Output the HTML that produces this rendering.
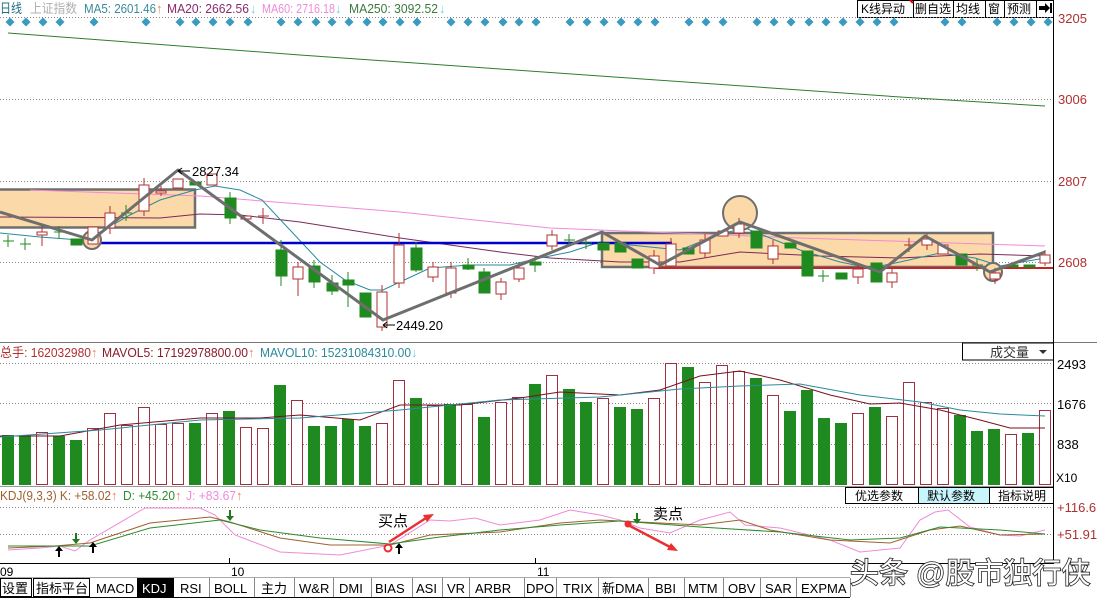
<!DOCTYPE html>
<html><head><meta charset="utf-8"><style>
html,body{margin:0;padding:0;background:#fff;width:1097px;height:599px;overflow:hidden}
svg{display:block;font-family:"Liberation Sans","Noto Sans CJK SC",sans-serif}
</style></head><body>
<svg width="1097" height="599" viewBox="0 0 1097 599" xmlns="http://www.w3.org/2000/svg">
<!-- header -->
<g font-size="13">
<text x="0" y="13" fill="#207080" textLength="22" lengthAdjust="spacingAndGlyphs">日线</text>
<text x="30" y="13" fill="#b0b0b0" textLength="47" lengthAdjust="spacingAndGlyphs">上证指数</text>
<text x="84" y="13" fill="#3a8a9a" textLength="72" lengthAdjust="spacingAndGlyphs">MA5: 2601.46</text><text x="156" y="13" fill="#f08060">↑</text>
<text x="167" y="13" fill="#8b2a6a" textLength="82" lengthAdjust="spacingAndGlyphs">MA20: 2662.56</text><text x="250" y="13" fill="#70d0e0">↓</text>
<text x="262" y="13" fill="#f08ad8" textLength="73" lengthAdjust="spacingAndGlyphs">MA60: 2716.18</text><text x="335" y="13" fill="#70d0e0">↓</text>
<text x="349" y="13" fill="#3c7a3c" textLength="89" lengthAdjust="spacingAndGlyphs">MA250: 3092.52</text><text x="439" y="13" fill="#70d0e0">↓</text>
</g>
<!-- top buttons -->
<g font-size="12" fill="#000">
<rect x="857.5" y="0.5" width="196" height="17" fill="#fff" stroke="#000"/>
<line x1="913.5" y1="0" x2="913.5" y2="18" stroke="#000"/><line x1="953.5" y1="0" x2="953.5" y2="18" stroke="#000"/>
<line x1="985.5" y1="0" x2="985.5" y2="18" stroke="#000"/><line x1="1004.5" y1="0" x2="1004.5" y2="18" stroke="#000"/>
<line x1="1036.5" y1="0" x2="1036.5" y2="18" stroke="#000"/>
<text x="861" y="13">K线异动</text><text x="915" y="13">删自选</text><text x="956" y="13">均线</text>
<text x="988" y="13">窗</text><text x="1007" y="13">预测</text>
<path d="M1039 6h6v-3l5 5-5 5v-3h-6z M1050 3h2v10h-2z" fill="#000"/>
<path d="M910 0l3 3" stroke="#e00" stroke-width="2"/>
</g>
<!-- grid -->
<g stroke="#888" stroke-dasharray="1,2" stroke-width="1">
<line x1="0" y1="17.5" x2="1053" y2="17.5"/><line x1="0" y1="99.5" x2="1053" y2="99.5"/>
<line x1="0" y1="181.5" x2="1053" y2="181.5"/><line x1="0" y1="262.5" x2="1053" y2="262.5"/>
<line x1="0" y1="363.5" x2="1053" y2="363.5"/><line x1="0" y1="403.5" x2="1053" y2="403.5"/><line x1="0" y1="444.5" x2="1053" y2="444.5"/>
<line x1="0" y1="507.5" x2="1053" y2="507.5"/><line x1="0" y1="534.5" x2="1053" y2="534.5"/>
</g>
<g font-size="13" fill="#b03030">
<text x="1058" y="23">3205</text><text x="1058" y="104">3006</text><text x="1058" y="186">2807</text><text x="1058" y="267">2608</text>
<text x="1057" y="512">+116.6</text><text x="1057" y="539">+51.91</text>
</g>
<g font-size="13" fill="#000">
<text x="1057" y="369">2493</text><text x="1057" y="409">1676</text><text x="1057" y="449">838</text>
<text x="1056" y="482" font-size="12">X10</text>
</g>
<!-- diamonds -->
<g fill="#3a9ac0">
<path d="M0 -4.5L4.5 0L0 4.5L-4.5 0Z" transform="translate(10,22)"/>
<path d="M0 -4.5L4.5 0L0 4.5L-4.5 0Z" transform="translate(26,22)"/><path d="M0 -4.5L4.5 0L0 4.5L-4.5 0Z" transform="translate(43,22)"/>
<path d="M0 -4.5L4.5 0L0 4.5L-4.5 0Z" transform="translate(60,22)"/><path d="M0 -4.5L4.5 0L0 4.5L-4.5 0Z" transform="translate(94,22)"/>
<path d="M0 -4.5L4.5 0L0 4.5L-4.5 0Z" transform="translate(146,22)"/><path d="M0 -4.5L4.5 0L0 4.5L-4.5 0Z" transform="translate(180,22)"/>
<path d="M0 -4.5L4.5 0L0 4.5L-4.5 0Z" transform="translate(196,22)"/><path d="M0 -4.5L4.5 0L0 4.5L-4.5 0Z" transform="translate(213,22)"/>
<path d="M0 -4.5L4.5 0L0 4.5L-4.5 0Z" transform="translate(230,22)"/><path d="M0 -4.5L4.5 0L0 4.5L-4.5 0Z" transform="translate(248,22)"/>
<path d="M0 -4.5L4.5 0L0 4.5L-4.5 0Z" transform="translate(281,22)"/><path d="M0 -4.5L4.5 0L0 4.5L-4.5 0Z" transform="translate(298,22)"/>
<path d="M0 -4.5L4.5 0L0 4.5L-4.5 0Z" transform="translate(316,22)"/><path d="M0 -4.5L4.5 0L0 4.5L-4.5 0Z" transform="translate(332,22)"/>
<path d="M0 -4.5L4.5 0L0 4.5L-4.5 0Z" transform="translate(349,22)"/><path d="M0 -4.5L4.5 0L0 4.5L-4.5 0Z" transform="translate(367,22)"/>
<path d="M0 -4.5L4.5 0L0 4.5L-4.5 0Z" transform="translate(383,22)"/><path d="M0 -4.5L4.5 0L0 4.5L-4.5 0Z" transform="translate(400,22)"/>
<path d="M0 -4.5L4.5 0L0 4.5L-4.5 0Z" transform="translate(417,22)"/><path d="M0 -4.5L4.5 0L0 4.5L-4.5 0Z" transform="translate(451,22)"/>
<path d="M0 -4.5L4.5 0L0 4.5L-4.5 0Z" transform="translate(468,22)"/><path d="M0 -4.5L4.5 0L0 4.5L-4.5 0Z" transform="translate(485,22)"/>
<path d="M0 -4.5L4.5 0L0 4.5L-4.5 0Z" transform="translate(503,22)"/><path d="M0 -4.5L4.5 0L0 4.5L-4.5 0Z" transform="translate(519,22)"/>
<path d="M0 -4.5L4.5 0L0 4.5L-4.5 0Z" transform="translate(536,22)"/><path d="M0 -4.5L4.5 0L0 4.5L-4.5 0Z" transform="translate(570,22)"/>
<path d="M0 -4.5L4.5 0L0 4.5L-4.5 0Z" transform="translate(587,22)"/><path d="M0 -4.5L4.5 0L0 4.5L-4.5 0Z" transform="translate(604,22)"/>
<path d="M0 -4.5L4.5 0L0 4.5L-4.5 0Z" transform="translate(621,22)"/><path d="M0 -4.5L4.5 0L0 4.5L-4.5 0Z" transform="translate(638,22)"/>
<path d="M0 -4.5L4.5 0L0 4.5L-4.5 0Z" transform="translate(655,22)"/><path d="M0 -4.5L4.5 0L0 4.5L-4.5 0Z" transform="translate(689,22)"/>
<path d="M0 -4.5L4.5 0L0 4.5L-4.5 0Z" transform="translate(706,22)"/><path d="M0 -4.5L4.5 0L0 4.5L-4.5 0Z" transform="translate(723,22)"/>
<path d="M0 -4.5L4.5 0L0 4.5L-4.5 0Z" transform="translate(757,22)"/><path d="M0 -4.5L4.5 0L0 4.5L-4.5 0Z" transform="translate(774,22)"/>
<path d="M0 -4.5L4.5 0L0 4.5L-4.5 0Z" transform="translate(791,22)"/><path d="M0 -4.5L4.5 0L0 4.5L-4.5 0Z" transform="translate(809,22)"/>
<path d="M0 -4.5L4.5 0L0 4.5L-4.5 0Z" transform="translate(826,22)"/><path d="M0 -4.5L4.5 0L0 4.5L-4.5 0Z" transform="translate(843,22)"/>
<path d="M0 -4.5L4.5 0L0 4.5L-4.5 0Z" transform="translate(860,22)"/><path d="M0 -4.5L4.5 0L0 4.5L-4.5 0Z" transform="translate(877,22)"/>
<path d="M0 -4.5L4.5 0L0 4.5L-4.5 0Z" transform="translate(894,22)"/><path d="M0 -4.5L4.5 0L0 4.5L-4.5 0Z" transform="translate(945,22)"/>
<path d="M0 -4.5L4.5 0L0 4.5L-4.5 0Z" transform="translate(962,22)"/><path d="M0 -4.5L4.5 0L0 4.5L-4.5 0Z" transform="translate(997,22)"/>
<path d="M0 -4.5L4.5 0L0 4.5L-4.5 0Z" transform="translate(1014,22)"/><path d="M0 -4.5L4.5 0L0 4.5L-4.5 0Z" transform="translate(1031,22)"/>
<path d="M0 -4.5L4.5 0L0 4.5L-4.5 0Z" transform="translate(1048,22)"/>
</g>
<!-- boxes -->
<rect x="-2" y="189.5" width="197" height="38" fill="#fcd9a8" stroke="#6e6e6e" stroke-width="2.5"/>
<rect x="602" y="233" width="391" height="34" fill="#fcd9a8" stroke="#6e6e6e" stroke-width="2.5"/>
<!-- MA lines -->
<polyline fill="none" stroke="#2e7d2e" stroke-width="1" points="8,33 300,55 600,76 900,97 1045,106"/>
<polyline fill="none" stroke="#f08ad8" stroke-width="1" points="30,190 200,196 400,212 550,228 800,238 1045,246"/>
<polyline fill="none" stroke="#7a2a5a" stroke-width="1" points="0,217 160,218 200,214 240,215 300,222 400,238 500,252 550,258 620,262 680,262 740,252 820,256 900,258 980,254 1045,256"/>
<polyline fill="none" stroke="#2a8a9a" stroke-width="1" points="0,233 40,237 80,240 100,232 130,215 160,200 195,190 215,186 240,190 262,200 290,230 320,262 345,280 370,290 383,290 400,282 430,268 470,265 510,265 540,258 570,252 600,242 640,246 680,250 720,234 745,228 770,238 800,250 840,262 870,268 900,262 940,253 975,258 1000,266 1045,258"/>
<!-- blue & red lines -->
<line x1="92" y1="243" x2="672" y2="243" stroke="#0000cc" stroke-width="2.5"/>
<line x1="655" y1="268" x2="1053" y2="268" stroke="#cc2222" stroke-width="2"/>
<!-- circles -->
<circle cx="92" cy="240" r="9" fill="#fcd9a8" stroke="#6e6e6e" stroke-width="2"/>
<circle cx="740" cy="213" r="17" fill="#fcd9a8" stroke="#6e6e6e" stroke-width="2"/>
<circle cx="993" cy="272" r="9" fill="#fcd9a8" stroke="#6e6e6e" stroke-width="2"/>
<!-- candles -->
<g stroke-width="1">
<g stroke="#1f8a1f" fill="#1f8a1f">
<path d="M8 235v12M3 241h11M25 238v12M20 244h11M59 226v12M54 232h11M126 205v16M121 213h11M823 270v12M818 276h11M977 259v12M972 265h11M569 234v12M564 240h11M586 237v12M581 243h11"/>
<rect x="71" y="239" width="11" height="6"/><rect x="190" y="182" width="11" height="3"/>
<rect x="225" y="198" width="11" height="20"/><path d="M230 192v32"/>
<rect x="276" y="250" width="11" height="26"/><path d="M281 240v46"/>
<rect x="309" y="266" width="11" height="16"/><path d="M314 260v28"/>
<rect x="327" y="283" width="11" height="8"/><path d="M332 275v20"/>
<rect x="343" y="280" width="11" height="5"/><path d="M348 272v35"/>
<rect x="360" y="293" width="11" height="24"/>
<rect x="411" y="248" width="11" height="22"/><path d="M416 242v30"/>
<rect x="463" y="265" width="11" height="4"/><path d="M468 258v12"/>
<rect x="479" y="272" width="11" height="21"/><path d="M484 268v24"/>
<rect x="530" y="262" width="11" height="3"/><path d="M535 256v16"/>
<rect x="598" y="243" width="11" height="7"/><rect x="615" y="243" width="11" height="9"/>
<rect x="632" y="259" width="11" height="9"/><rect x="683" y="248" width="11" height="6"/>
<rect x="751" y="231" width="11" height="17"/><rect x="785" y="243" width="11" height="5"/>
<rect x="802" y="251" width="11" height="25"/><rect x="836" y="273" width="11" height="6"/>
<rect x="871" y="263" width="11" height="19"/><rect x="956" y="254" width="11" height="11"/>
<rect x="1007" y="265" width="11" height="2"/><rect x="1024" y="265" width="11" height="2"/>
</g>
<g stroke="#b03030" fill="#fff">
<path d="M42 226v20M110 206v28M144 178v38M161 186v10M263 208v16M258 216h11M298 262v34M382 285v46M399 233v55M433 262v20M451 262v36M501 278v22M519 262v20M552 230v20M654 250v24M671 238v30M705 234v24M739 218v20M773 240v24M858 264v20M892 268v20M909 238v14M904 245h11M927 234v16M995 268v16M1045 250v16"/>
<rect x="37" y="232" width="10" height="3"/><rect x="88" y="227" width="10" height="17"/>
<rect x="105" y="213" width="10" height="15"/><rect x="139" y="185" width="10" height="26"/>
<rect x="156" y="191" width="10" height="2"/><rect x="173" y="179" width="10" height="9"/>
<rect x="207" y="174" width="10" height="11"/><rect x="241" y="216" width="10" height="3"/>
<rect x="293" y="267" width="10" height="12"/><rect x="377" y="292" width="10" height="35"/>
<rect x="394" y="245" width="10" height="38"/><rect x="428" y="267" width="10" height="10"/>
<rect x="446" y="268" width="10" height="25"/><rect x="496" y="282" width="10" height="12"/>
<rect x="514" y="268" width="10" height="11"/><rect x="547" y="235" width="10" height="11"/>
<rect x="649" y="256" width="10" height="12"/><rect x="666" y="244" width="10" height="22"/>
<rect x="700" y="240" width="10" height="13"/><rect x="718" y="231" width="10" height="5"/>
<rect x="734" y="224" width="10" height="9"/><rect x="768" y="246" width="10" height="13"/>
<rect x="853" y="269" width="10" height="8"/><rect x="887" y="273" width="10" height="9"/>
<rect x="922" y="239" width="10" height="6"/><rect x="938" y="245" width="10" height="9"/>
<rect x="990" y="273" width="10" height="6"/><rect x="1040" y="255" width="10" height="8"/>
</g>
</g>
<!-- zigzag -->
<polyline fill="none" stroke="#6e6e6e" stroke-width="3" stroke-linejoin="round" points="0,212 92,240 178,170 383,320 602,232 660,265 740,222 880,272 925,236 990,272 1045,252"/>
<g font-size="13" fill="#000">
<path d="M178 171h12M178 171l4 -3M178 171l4 3" stroke="#000" fill="none"/>
<text x="192" y="176">2827.34</text>
<path d="M383 325h12M383 325l4 -3M383 325l4 3" stroke="#000" fill="none"/>
<text x="396" y="330">2449.20</text>
</g>
<!-- panel separators -->
<line x1="0" y1="342.5" x2="1097" y2="342.5" stroke="#777"/>
<line x1="0" y1="486.5" x2="1053" y2="486.5" stroke="#999"/>
<line x1="0" y1="563.5" x2="1054" y2="563.5" stroke="#000"/>
<line x1="1053.5" y1="0" x2="1053.5" y2="564" stroke="#000"/>
<!-- volume header -->
<g font-size="13">
<text x="0" y="357" fill="#b03030" textLength="91" lengthAdjust="spacingAndGlyphs">总手: 162032980</text><text x="91" y="357" fill="#f08060">↑</text>
<text x="102" y="357" fill="#8b1a2a" textLength="146" lengthAdjust="spacingAndGlyphs">MAVOL5: 17192978800.00</text><text x="248" y="357" fill="#f08060">↑</text>
<text x="260" y="357" fill="#2a8a9a" textLength="151" lengthAdjust="spacingAndGlyphs">MAVOL10: 15231084310.00</text><text x="411" y="357" fill="#70d0e0">↓</text>
</g>
<rect x="962.5" y="343" width="91" height="17" fill="#fff" stroke="#000"/>
<text x="990" y="357" font-size="13" fill="#333">成交量</text>
<path d="M1039 350h8l-4 4z" fill="#333"/>
<!-- volume bars -->
<g fill="#1f8a1f">
<rect x="2" y="435" width="12" height="50"/><rect x="19" y="436" width="12" height="49"/>
<rect x="53" y="436" width="12" height="49"/><rect x="70" y="440" width="12" height="45"/>
<rect x="189" y="423" width="12" height="62"/><rect x="223" y="411" width="12" height="74"/>
<rect x="274" y="385" width="12" height="100"/><rect x="308" y="426" width="12" height="59"/>
<rect x="325" y="426" width="12" height="59"/><rect x="342" y="419" width="12" height="66"/>
<rect x="359" y="426" width="12" height="59"/><rect x="410" y="398" width="12" height="87"/>
<rect x="444" y="404" width="12" height="81"/><rect x="478" y="417" width="12" height="68"/>
<rect x="529" y="384" width="12" height="101"/><rect x="563" y="389" width="12" height="96"/>
<rect x="580" y="402" width="12" height="83"/><rect x="614" y="407" width="12" height="78"/>
<rect x="631" y="409" width="12" height="76"/><rect x="682" y="367" width="12" height="118"/>
<rect x="750" y="378" width="12" height="107"/><rect x="784" y="411" width="12" height="74"/>
<rect x="801" y="390" width="12" height="95"/><rect x="818" y="418" width="12" height="67"/>
<rect x="835" y="423" width="12" height="62"/><rect x="869" y="407" width="12" height="78"/>
<rect x="954" y="415" width="12" height="70"/><rect x="971" y="431" width="12" height="54"/>
<rect x="988" y="429" width="12" height="56"/><rect x="1022" y="433" width="12" height="52"/>
</g>
<g fill="#fff" stroke="#a03040">
<rect x="36.5" y="432.5" width="11" height="52"/><rect x="87.5" y="428.5" width="11" height="56"/>
<rect x="104.5" y="413.5" width="11" height="71"/><rect x="121.5" y="425.5" width="11" height="59"/>
<rect x="138.5" y="407.5" width="11" height="77"/><rect x="155.5" y="424.5" width="11" height="60"/>
<rect x="172.5" y="423.5" width="11" height="61"/><rect x="206.5" y="413.5" width="11" height="71"/>
<rect x="240.5" y="427.5" width="11" height="57"/><rect x="257.5" y="428.5" width="11" height="56"/>
<rect x="291.5" y="400.5" width="11" height="84"/><rect x="376.5" y="423.5" width="11" height="61"/>
<rect x="393.5" y="380.5" width="11" height="104"/><rect x="427.5" y="405.5" width="11" height="79"/>
<rect x="461.5" y="404.5" width="11" height="80"/><rect x="495.5" y="402.5" width="11" height="82"/>
<rect x="512.5" y="397.5" width="11" height="87"/><rect x="546.5" y="375.5" width="11" height="109"/>
<rect x="597.5" y="398.5" width="11" height="86"/><rect x="648.5" y="398.5" width="11" height="86"/>
<rect x="665.5" y="363.5" width="11" height="121"/><rect x="699.5" y="382.5" width="11" height="102"/>
<rect x="716.5" y="365.5" width="11" height="119"/><rect x="733.5" y="371.5" width="11" height="113"/>
<rect x="767.5" y="395.5" width="11" height="89"/><rect x="852.5" y="413.5" width="11" height="71"/>
<rect x="886.5" y="416.5" width="11" height="68"/><rect x="903.5" y="382.5" width="11" height="102"/>
<rect x="920.5" y="402.5" width="11" height="82"/><rect x="937.5" y="408.5" width="11" height="76"/>
<rect x="1005.5" y="434.5" width="11" height="50"/><rect x="1039.5" y="410.5" width="11" height="74"/>
</g>
<polyline fill="none" stroke="#7a1020" stroke-width="1" points="0,436 60,436 120,425 200,418 260,418 300,415 360,420 400,405 460,405 520,398 560,392 620,395 660,390 700,376 740,371 780,380 830,395 870,404 900,403 940,410 980,420 1010,428 1045,428"/>
<polyline fill="none" stroke="#2a8a9a" stroke-width="1" points="0,437 100,430 200,420 300,418 400,410 500,400 600,397 680,389 740,386 800,384 860,395 920,402 960,410 1000,414 1045,416"/>
<!-- KDJ header -->
<g font-size="13">
<text x="0" y="500" fill="#a06030" textLength="111" lengthAdjust="spacingAndGlyphs">KDJ(9,3,3) K: +58.02</text><text x="111" y="500" fill="#f08060">↑</text>
<text x="123" y="500" fill="#2e8a2e" textLength="52" lengthAdjust="spacingAndGlyphs">D: +45.20</text><text x="175" y="500" fill="#f08060">↑</text>
<text x="186" y="500" fill="#f08ad8" textLength="50" lengthAdjust="spacingAndGlyphs">J: +83.67</text><text x="236" y="500" fill="#f08060">↑</text>
</g>
<rect x="845.5" y="487.5" width="208" height="16" fill="#fff" stroke="#000"/>
<rect x="918" y="488" width="71" height="15" fill="#c8f4fc"/>
<line x1="918.5" y1="487" x2="918.5" y2="504" stroke="#000"/><line x1="989.5" y1="487" x2="989.5" y2="504" stroke="#000"/>
<g font-size="12" fill="#000"><text x="855" y="500">优选参数</text><text x="927" y="500">默认参数</text><text x="998" y="500">指标说明</text></g>
<!-- KDJ lines -->
<polyline fill="none" stroke="#f08ad8" points="8,550 40,548 60,546 75,551 90,540 145,508 200,508 215,515 235,535 280,552 340,555 390,545 430,520 450,521 475,518 500,525 540,520 570,510 600,515 620,520 640,528 670,533 700,520 730,512 745,525 780,528 830,540 860,552 900,548 920,520 935,512 948,510 970,527 1000,535 1020,536 1045,530"/>
<polyline fill="none" stroke="#a06030" points="8,548 55,546 90,543 150,523 210,517 230,522 280,538 330,545 390,545 430,535 500,532 560,523 600,520 640,522 700,525 740,520 770,530 830,540 890,543 930,530 960,526 1000,535 1045,534"/>
<polyline fill="none" stroke="#2e8a2e" points="8,546 50,546 90,546 150,528 220,520 260,530 320,538 390,544 440,537 500,530 560,525 620,521 700,527 780,532 850,540 900,538 940,527 1000,530 1045,534"/>
<g fill="#000"><path d="M59 546l-4 5h3v6h2v-6h3z"/><path d="M93 542l-4 5h3v6h2v-6h3z"/><path d="M399 543l-4 5h3v6h2v-6h3z"/></g>
<g fill="#1f7a1f"><path d="M76 544l-4-5h3v-6h2v6h3z"/><path d="M230 521l-4-5h3v-6h2v6h3z"/><path d="M637 524l-4-5h3v-6h2v6h3z"/></g>
<circle cx="388" cy="548" r="3.5" fill="none" stroke="#e83030" stroke-width="2"/>
<path d="M389 542L426 518" stroke="#e83030" stroke-width="2.5"/><path d="M434 514l-11 1l4 7z" fill="#e83030"/>
<circle cx="628" cy="524" r="3.5" fill="#e83030"/>
<path d="M630 526L670 547" stroke="#e83030" stroke-width="2.5"/><path d="M678 551l-11-1l4-7z" fill="#e83030"/>
<g font-size="15" fill="#000"><text x="378" y="526">买点</text><text x="653" y="519">卖点</text></g>
<!-- date axis -->
<g font-size="12" fill="#000"><text x="0" y="576">09</text><text x="231" y="576">10</text><text x="537" y="576">11</text></g>
<path d="M229.5 558v6M535.5 558v6" stroke="#000"/>
<!-- tabs -->
<rect x="0" y="578" width="850" height="20" fill="#fff"/>
<line x1="0" y1="597.5" x2="850" y2="597.5" stroke="#000"/>
<line x1="0" y1="577.5" x2="850" y2="577.5" stroke="#aaa"/>
<rect x="137" y="578" width="37" height="19" fill="#000"/>
<rect x="0.5" y="578.5" width="31" height="18" fill="none" stroke="#000"/>
<rect x="33.5" y="578.5" width="56" height="18" fill="none" stroke="#000"/>
<g stroke="#888"><path d="M209.5 578v19M254.5 578v19M294.5 578v19M333.5 578v19M371.5 578v19M412.5 578v19M442.5 578v19M469.5 578v19M524.5 578v19M556.5 578v19M598.5 578v19M648.5 578v19M684.5 578v19M723.5 578v19M760.5 578v19M796.5 578v19M850.5 578v19"/></g>
<g font-size="13" fill="#000">
<text x="2" y="593">设置</text><text x="36" y="593">指标平台</text><text x="96" y="593">MACD</text>
<text x="142" y="593" fill="#fff">KDJ</text><text x="180" y="593">RSI</text><text x="214" y="593">BOLL</text>
<text x="261" y="593">主力</text><text x="299" y="593">W&amp;R</text><text x="339" y="593">DMI</text>
<text x="375" y="593">BIAS</text><text x="416" y="593">ASI</text><text x="447" y="593">VR</text>
<text x="475" y="593">ARBR</text><text x="526" y="593">DPO</text><text x="563" y="593">TRIX</text>
<text x="602" y="593">新DMA</text><text x="655" y="593">BBI</text><text x="688" y="593">MTM</text>
<text x="728" y="593">OBV</text><text x="765" y="593">SAR</text><text x="801" y="593">EXPMA</text>
</g>
<!-- watermark -->
<text x="850" y="583" font-size="29" fill="#fff" stroke="#222" stroke-width="1.6" paint-order="stroke" font-family="Liberation Sans,Noto Sans CJK SC,sans-serif">头条 @股市独行侠</text>
</svg>
</body></html>
